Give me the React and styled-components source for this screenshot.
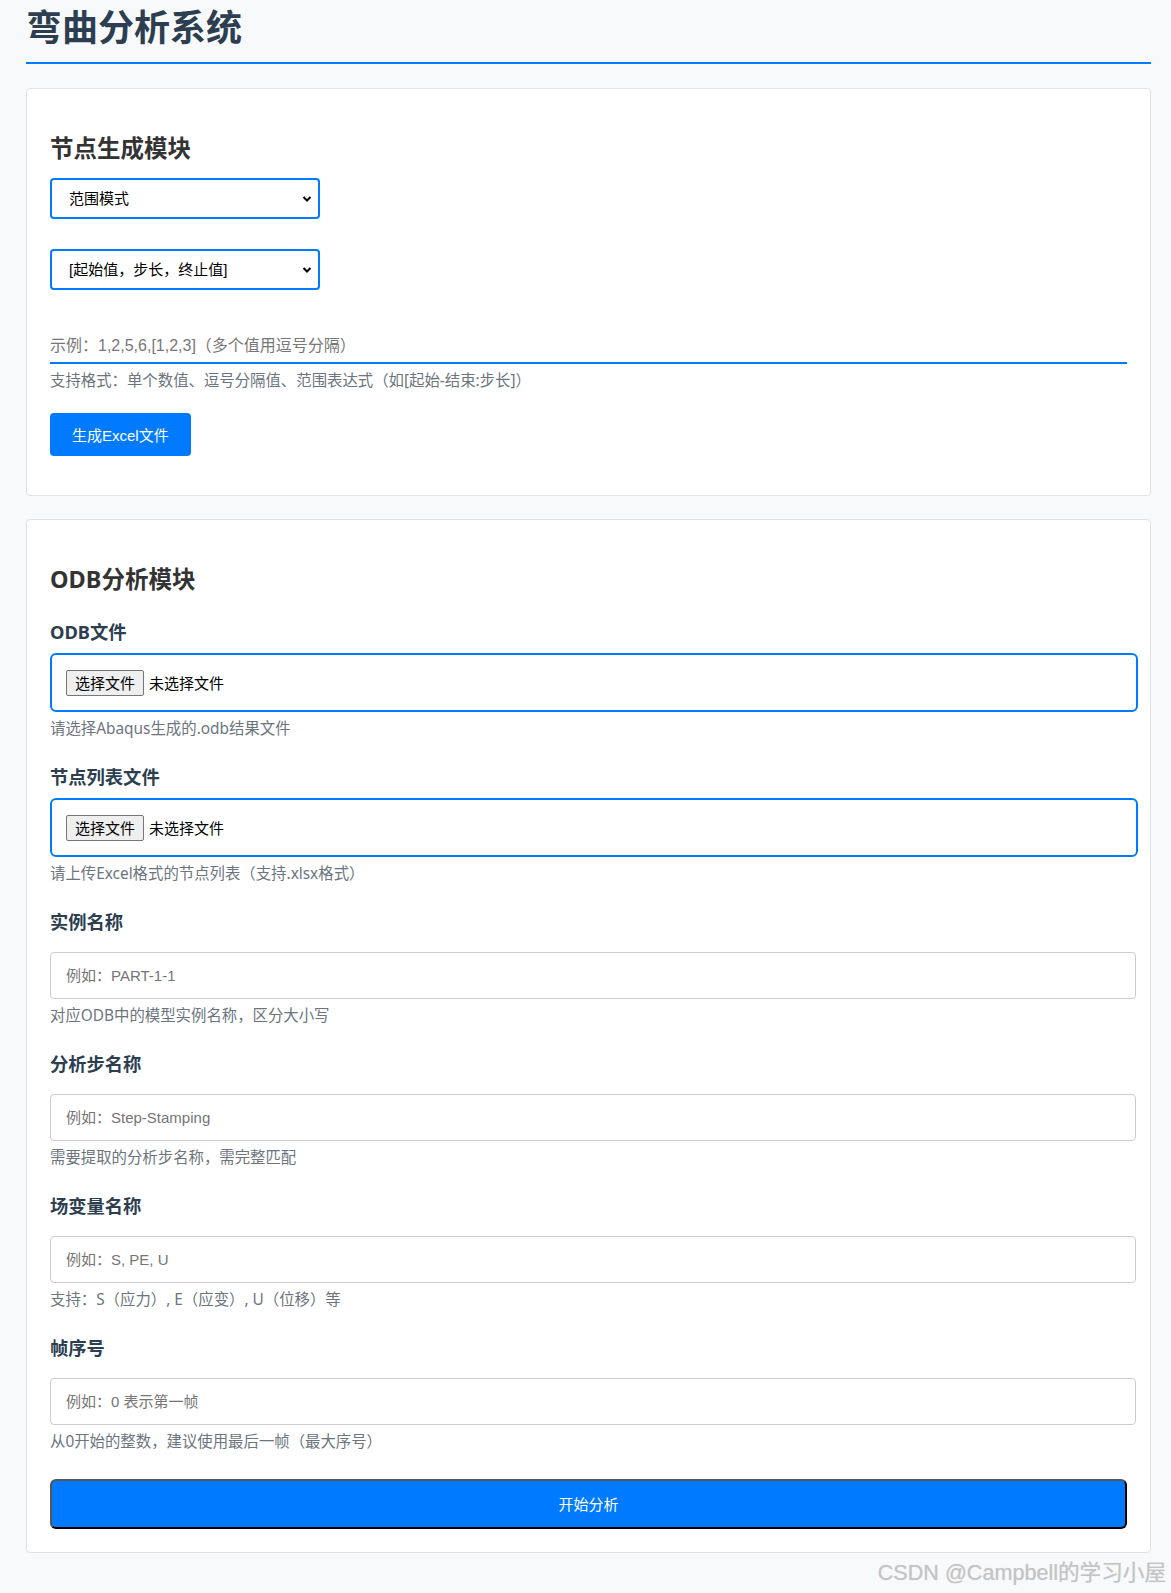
import React from "react";
import styled, { createGlobalStyle } from "styled-components";

const blue = "#007bff";
const navy = "#2c3e50";
const sans = `"Noto Sans", "Noto Sans CJK SC", sans-serif`;
const arial = `"Liberation Sans", "Noto Sans CJK SC", sans-serif`;

const GlobalStyle = createGlobalStyle`
  html, body {
    margin: 0;
    padding: 0;
    background: #f8f9fa;
  }
  body {
    font-family: ${sans};
    color: #333;
  }
  * {
    box-sizing: border-box;
  }
`;

const Page = styled.div`
  position: relative;
  min-height: 1593px;
  padding: 0 20px 40px 26px;
`;

const Title = styled.h1`
  margin: 0;
  padding: 6px 0 12px;
  font-size: 36px;
  line-height: 44px;
  font-weight: 700;
  color: ${navy};
  border-bottom: 2px solid ${blue};
`;

const Card = styled.section`
  background: #fff;
  border: 1px solid #e0e3e6;
  border-radius: 4px;
  padding: 23px;
  margin-top: ${(p) => p.$mt || 23}px;
`;

const CardHeading = styled.h2`
  margin: 22px 0 ${(p) => p.$mb || 16}px;
  font-size: 23.5px;
  line-height: 28px;
  font-weight: 700;
  color: #333;
`;

const SelectWrap = styled.div`
  position: relative;
  width: 270px;
  margin-bottom: ${(p) => p.$mb || 0}px;
`;

const Select = styled.select`
  appearance: none;
  display: block;
  width: 100%;
  height: 41px;
  padding: 0 30px 0 17px;
  border: 2px solid ${blue};
  border-radius: 4px;
  background: #fff;
  font-family: ${arial};
  font-size: 15px;
  color: #000;
  outline: none;
`;

const Chevron = styled.svg`
  position: absolute;
  right: 8px;
  top: 17px;
  pointer-events: none;
`;

const LineInput = styled.input`
  display: block;
  width: 100%;
  height: 40px;
  margin-top: 34px;
  padding: 5px 0 0;
  border: none;
  border-bottom: 2px solid ${blue};
  background: transparent;
  font-family: ${arial};
  font-size: 16px;
  outline: none;

  &::placeholder {
    color: #777;
  }
`;

const Help = styled.p`
  margin: ${(p) => p.$mt || 5.5}px 0 0;
  font-family: ${sans};
  font-size: 15.4px;
  line-height: 21px;
  color: #6c757d;
`;

const PrimaryButton = styled.button`
  display: block;
  height: 43px;
  margin: 22px 0 16px;
  padding: 0 22px;
  border: none;
  border-radius: 4px;
  background: ${blue};
  color: #fff;
  font-family: ${arial};
  font-size: 15px;
  cursor: pointer;
`;

const Group = styled.div`
  margin-bottom: 25.5px;

  &:last-of-type {
    margin-bottom: 0;
  }
`;

const Label = styled.label`
  display: block;
  font-family: ${sans};
  font-size: 18.3px;
  line-height: 26px;
  font-weight: 700;
  color: ${navy};
`;

const FileBox = styled.div`
  display: flex;
  align-items: center;
  width: calc(100% + 11px);
  height: 59px;
  margin-top: 8px;
  padding: 0 14px;
  border: 2px solid ${blue};
  border-radius: 6px;
  background: #fff;
  font-family: ${arial};
  font-size: 15px;
  color: #000;
`;

const FileButton = styled.span`
  display: inline-flex;
  align-items: center;
  height: 26px;
  padding: 0 8px;
  margin-right: 5px;
  border: 1px solid #767676;
  border-radius: 2px;
  background: #efefef;
`;

const TextInput = styled.input`
  display: block;
  width: calc(100% + 9px);
  height: 47px;
  margin-top: 17px;
  padding: 0 15px;
  border: 1px solid #ccc;
  border-radius: 4px;
  font-family: ${arial};
  font-size: 15px;
  outline: none;

  &::placeholder {
    color: #757575;
  }
`;

const SubmitButton = styled.button`
  display: block;
  width: 100%;
  height: 50px;
  margin-top: 27px;
  border: 2px solid;
  border-color: #555 #000 #000 #555;
  border-radius: 6px;
  background: ${blue};
  color: #fff;
  font-family: ${arial};
  font-size: 15px;
  cursor: pointer;
`;

const Watermark = styled.div`
  position: absolute;
  right: 5px;
  top: 1559px;
  font-family: ${arial};
  font-size: 21.6px;
  line-height: 28px;
  color: #c4c4c4;
  text-shadow: 0 0 1px rgba(0, 0, 0, 0.15);
`;

const SelectBox = ({ options, mb }) => (
  <SelectWrap $mb={mb}>
    <Select defaultValue={options[0]}>
      {options.map((o) => (
        <option key={o}>{o}</option>
      ))}
    </Select>
    <Chevron width="10" height="8" viewBox="0 0 10 8">
      <path d="M1.5 2l3.5 3.5L8.5 2" fill="none" stroke="#000" strokeWidth="2" />
    </Chevron>
  </SelectWrap>
);

const textFields = [
  { label: "实例名称", placeholder: "例如：PART-1-1", help: "对应ODB中的模型实例名称，区分大小写" },
  { label: "分析步名称", placeholder: "例如：Step-Stamping", help: "需要提取的分析步名称，需完整匹配" },
  { label: "场变量名称", placeholder: "例如：S, PE, U", help: "支持：S（应力）, E（应变）, U（位移）等" },
  { label: "帧序号", placeholder: "例如：0 表示第一帧", help: "从0开始的整数，建议使用最后一帧（最大序号）" },
];

const fileFields = [
  { label: "ODB文件", help: "请选择Abaqus生成的.odb结果文件" },
  { label: "节点列表文件", help: "请上传Excel格式的节点列表（支持.xlsx格式）" },
];

const App = () => {
  return (
    <Page>
      <GlobalStyle />
      <Title>弯曲分析系统</Title>

      <Card $mt={24}>
        <CardHeading>节点生成模块</CardHeading>
        <SelectBox options={["范围模式", "列表模式"]} mb={30} />
        <SelectBox options={["[起始值，步长，终止值]", "[起始值，终止值，步长]"]} />
        <LineInput placeholder="示例：1,2,5,6,[1,2,3]（多个值用逗号分隔）" />
        <Help $mt={6}>支持格式：单个数值、逗号分隔值、范围表达式（如[起始-结束:步长]）</Help>
        <PrimaryButton>生成Excel文件</PrimaryButton>
      </Card>

      <Card>
        <CardHeading $mb={26}>ODB分析模块</CardHeading>
        {fileFields.map((f) => (
          <Group key={f.label}>
            <Label>{f.label}</Label>
            <FileBox>
              <FileButton>选择文件</FileButton>
              未选择文件
            </FileBox>
            <Help>{f.help}</Help>
          </Group>
        ))}
        {textFields.map((f) => (
          <Group key={f.label}>
            <Label>{f.label}</Label>
            <TextInput placeholder={f.placeholder} />
            <Help>{f.help}</Help>
          </Group>
        ))}
        <SubmitButton>开始分析</SubmitButton>
      </Card>

      <Watermark>CSDN @Campbell的学习小屋</Watermark>
    </Page>
  );
};

export default App;
